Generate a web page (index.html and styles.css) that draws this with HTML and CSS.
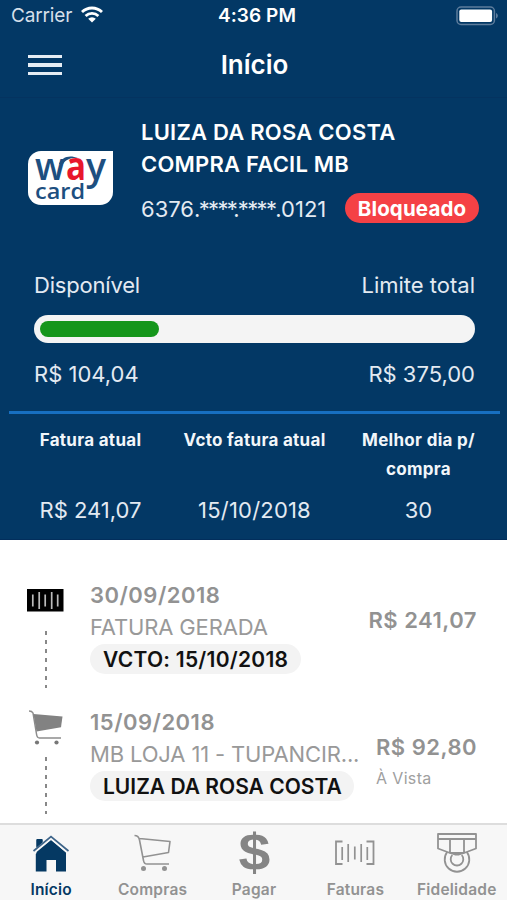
FILE: index.html
```html
<!DOCTYPE html>
<html lang="pt-BR">
<head>
<meta charset="utf-8">
<meta name="viewport" content="width=device-width, initial-scale=1">
<title>Início</title>
<link rel="stylesheet" href="styles.css">
</head>
<body>
<div class="app">
  <header class="top">
    <div class="status">
      <div class="carrier"><span>Carrier</span>
        <svg class="wifi" viewBox="0 0 22 17" width="22" height="17"><g fill="none" stroke="#fff" stroke-width="2.8"><path d="M1 6.1a14.2 14.2 0 0 1 20 0"/><path d="M4.600 10a9.200 9.200 0 0 1 12.800 0"/></g><path d="M11 16.600 7.200 12.700a5.400 5.400 0 0 1 7.600 0z" fill="#fff"/></svg>
      </div>
      <span class="clock">4:36 PM</span>
      <svg class="battery" viewBox="0 0 43 20" width="43" height="20"><rect x="1" y="1" width="37.4" height="17.4" rx="4" fill="none" stroke="#5d7c9c" stroke-width="1.5"/><rect x="3.3" y="3.4" width="32.8" height="12.6" rx="2" fill="#fff"/><path d="M40 7c2.500 1 2.500 4.500 0 5.500z" fill="#5d7c9c"/></svg>
    </div>
    <div class="nav">
      <div class="menu"><i></i><i></i><i></i></div>
      <h1 class="title">Início</h1>
      <span></span>
    </div>
  </header>

  <section class="summary">
    <div class="card">
      <svg class="logo" viewBox="0 0 85 54" width="85" height="54">
        <path d="M13 0H85V41a13 13 0 0 1-13 13H13A13 13 0 0 1 0 41V13A13 13 0 0 1 13 0z" fill="#fff"/>
        <text class="logo-blue" x="7" y="28.500" textLength="30" lengthAdjust="spacingAndGlyphs">w</text>
        <text class="logo-a" x="38" y="28.500" textLength="20" lengthAdjust="spacingAndGlyphs">a</text>
        <text class="logo-blue" x="58" y="28.500" textLength="20" lengthAdjust="spacingAndGlyphs">y</text>
        <path d="M31 13C34 6 41 3.500 50 7 43 6.500 38 8 35 13z" fill="#1d4f80"/>
        <text class="logo-card" x="7" y="47.500" textLength="50" lengthAdjust="spacingAndGlyphs">card</text>
      </svg>
      <div class="holder">
        <div class="name">LUIZA DA ROSA COSTA<br>COMPRA FACIL MB</div>
        <div class="number"><span class="digits">6376<span class="mask">.****.****</span>.0121</span><span class="blocked">Bloqueado</span></div>
      </div>
    </div>
    <div class="limit">
      <div class="row"><span class="available">Disponível</span><span>Limite total</span></div>
      <div class="track"><div class="fill" style="width:27.7%"></div></div>
      <div class="row"><span>R$ 104,04</span><span>R$ 375,00</span></div>
    </div>
    <div class="invoice">
      <div class="col"><b>Fatura atual</b><span>R$ 241,07</span></div>
      <div class="col"><b>Vcto fatura atual</b><span class="due">15/10/2018</span></div>
      <div class="col"><b>Melhor dia p/<br>compra</b><span>30</span></div>
    </div>
  </section>

  <main class="feed">
    <article class="entry invoice-entry">
      <div class="rail">
        <svg viewBox="0 0 38 26" width="38" height="26"><rect y="2" width="36.500" height="22.500" fill="#000"/><g stroke="#bbb" stroke-width="1.700"><path d="M5.800 7.500v12M12.200 5v17M18.200 7.500v12M24.700 5v17M30.700 7.500v12"/></g></svg>
        <div class="dash"></div>
      </div>
      <div class="info">
        <div class="date">30/09/2018</div>
        <div class="desc">FATURA GERADA</div>
        <div class="tag tag-due">VCTO: 15/10/2018</div>
      </div>
      <div class="amount"><b>R$ 241,07</b></div>
    </article>
    <article class="entry">
      <div class="rail">
        <svg viewBox="0 0 38 36" width="38" height="36"><path d="M2 1Q5 1 6 3L9.500 24Q10 28 12.500 28H34" fill="none" stroke="#8d8d8d" stroke-width="1.500"/><path d="M6.500 4 35.500 6.500 34 17.200 9.500 21.500z" fill="#828282"/><circle cx="10" cy="32.500" r="2.100" fill="#777"/><circle cx="29.500" cy="32.500" r="2.100" fill="#777"/></svg>
        <div class="dash"></div>
      </div>
      <div class="info">
        <div class="date">15/09/2018</div>
        <div class="desc">MB LOJA 11 - TUPANCIR...</div>
        <div class="tag tag-holder">LUIZA DA ROSA COSTA</div>
      </div>
      <div class="amount"><b>R$ 92,80</b><small>À Vista</small></div>
    </article>
  </main>

  <nav class="tabs">
    <div class="tab active">
      <svg viewBox="0 0 40 44" width="40" height="44"><path d="M5.500 19V6h6v6.500L20 5.500 35 18.500V37.500H25V26H15.500V37.500H4.800V20z" fill="#053963"/><path d="M2.500 18 20 3.500 37.500 18" fill="none" stroke="#f8f8f8" stroke-width="4"/><path d="M2.500 17 20 2.500 37.500 17" fill="none" stroke="#3d6489" stroke-width="1.700"/><path d="M5.500 13.500V5h6V8.500z" fill="#053963"/></svg>
      <span>Início</span>
    </div>
    <div class="tab">
      <svg viewBox="0 0 40 44" width="40" height="44"><g fill="none" stroke="#929292" stroke-width="1.600" stroke-linejoin="round"><path d="M1.500 1.500C5 1.500 6 3 6.500 6L10.500 26.500Q11 30 14 30H36M6.500 4.500 37 7.500 35.500 18.500 10 23"/></g><circle cx="10.500" cy="34.500" r="2.500" fill="#929292"/><circle cx="31.500" cy="34.500" r="2.500" fill="#929292"/></svg>
      <span>Compras</span>
    </div>
    <div class="tab">
      <svg viewBox="0 0 40 44" width="40" height="44"><text class="dollar" x="4.500" y="35.500" textLength="32" lengthAdjust="spacingAndGlyphs">$</text></svg>
      <span>Pagar</span>
    </div>
    <div class="tab">
      <svg viewBox="0 0 42 44" width="42" height="44"><g fill="none" stroke="#929292" stroke-width="1.800"><path d="M8.500 7.500H2V30H8.500M32.500 7.500H39.500V30H32.500"/><path d="M8.200 13v13M14.200 10v18M20.800 12.500v13M27.200 10v18M33.300 13v13" stroke-width="1.700"/></g></svg>
      <span>Faturas</span>
    </div>
    <div class="tab">
      <svg viewBox="0 0 42 44" width="42" height="44"><g fill="none" stroke="#929292" stroke-width="1.800" stroke-linejoin="round"><path d="M2 0H40V14.500L28 19H14L2 14.500zM2 5H40M14 5.500V19M28 5.500V19"/><path d="M11.200 18A12.300 12.300 0 1 0 30.800 18"/><path d="M16.300 21A6.300 6.300 0 1 0 25.700 21"/><path d="M14 19 19 20.500H23L28 19"/></g></svg>
      <span>Fidelidade</span>
    </div>
  </nav>
</div>
</body>
</html>
```
FILE: styles.css
```css
* { box-sizing: border-box; }
body {
  margin: 0;
  background: #fff;
  font-family: Inter, "Liberation Sans", sans-serif;
}
.app {
  width: 507px;
  height: 900px;
  display: flex;
  flex-direction: column;
  overflow: hidden;
  white-space: nowrap;
}
svg { display: block; flex: none; overflow: visible; }

.top { height: 98px; background: #033865; color: #fff; border-bottom: 1px solid #043360; flex: none; }
.status {
  height: 30px;
  padding: 0 8px 0 11px;
  display: grid;
  grid-template-columns: 1fr auto 1fr;
  align-items: center;
}
.carrier { display: flex; align-items: center; gap: 9px; font-size: 19px; letter-spacing: -0.15px; color: #d5dfe9; }
.wifi { margin-top: -2px; }
.clock { font-size: 19px; font-weight: 600; line-height: 30px; margin-top: 1px; padding-left: 4px; letter-spacing: 0.1px; }
.battery { justify-self: end; }
.nav {
  height: 68px;
  padding: 2px 26px 0 28px;
  display: grid;
  grid-template-columns: 1fr auto 1fr;
  align-items: center;
}
.menu { display: flex; flex-direction: column; gap: 5px; width: 34px; }
.menu i { height: 3.500px; background: #e6edf4; }
.title { margin: 0; font-size: 26px; font-weight: 600; line-height: 66px; }

.summary { height: 442px; background: #033865; color: #e3eaf2; flex: none; border-bottom: 1px solid #022e5c; }
.card { display: flex; padding: 18px 28px 0; height: 169px; }
.logo { margin-top: 35px; margin-right: 28px; }
.logo-a { font: 700 40px "Open Sans", sans-serif; fill: #e8172c; }
.logo-blue { font: 600 38px "Open Sans", sans-serif; fill: #1d4f80; }
.logo-card { font: 600 22px "Open Sans", sans-serif; fill: #1d4f80; }
.name { font-size: 22px; font-weight: 600; line-height: 32px; color: #fff; letter-spacing: 0.23px; }
.number { display: flex; align-items: center; margin-top: 12px; height: 31px; font-size: 22px; }
.digits { width: 204px; margin-top: 2px; }
.mask { letter-spacing: -1.650px; }
.blocked {
  width: 134px;
  height: 30px;
  margin-top: 1px;
  border-radius: 15px;
  background: #f54145;
  color: #fff;
  font-size: 20.500px;
  letter-spacing: 0.15px;
  font-weight: 700;
  line-height: 31px;
  text-align: center;
}
.limit { padding: 0 32px 0 34px; font-size: 22px; height: 144px; }
.row { display: flex; justify-content: space-between; line-height: 36px; }
.available { letter-spacing: -0.200px; }
.track { height: 28px; margin: 12px 0 13px; padding: 6px; border-radius: 14px; background: #f4f4f4; }
.fill { height: 16px; border-radius: 8px; background: #15961b; }
.invoice {
  margin: 0 7px 0 9px;
  border-top: 3px solid #176fc1;
  display: grid;
  grid-template-columns: 163px 165px 163px;
  padding-top: 12px;
}
.col { display: flex; flex-direction: column; align-items: center; text-align: center; }
.col b { font-size: 17px; line-height: 28.500px; letter-spacing: 0.300px; font-weight: 700; height: 70px; color: #f2f6fa; }
.col span { font-size: 22px; line-height: 28px; }
.due { letter-spacing: 0.200px; }

.feed { height: 283px; flex: none; padding-top: 39px; }
.entry { display: flex; height: 127px; padding: 0 30px 0 27px; color: #929292; }
.rail { width: 63px; height: 127px; flex: none; display: flex; flex-direction: column; }
.rail svg { margin: 4px 0 3px; }
.invoice-entry .rail svg { margin: 8px 0 10px; }
.dash {
  width: 2px;
  height: 57px;
  margin: 8px 0 0 18px;
  background: repeating-linear-gradient(#888 0 4px, transparent 4px 9px);
}
.info { width: 270px; flex: none; }
.date { font-size: 22px; font-weight: 600; line-height: 32px; letter-spacing: 0.500px; }
.desc { font-size: 22px; line-height: 32px; letter-spacing: -0.150px; color: #999; }
.tag { height: 30px; line-height: 31px; border-radius: 15px; background: #f3f3f3; color: #111; font-size: 21px; font-weight: 600; padding-left: 13px; margin-top: 1px; }
.tag-due { width: 211px; letter-spacing: 0.250px; }
.tag-holder { width: 264px; }
.amount { flex: 1; display: flex; flex-direction: column; align-items: flex-end; padding-top: 25px; }
.amount b { font-size: 22px; line-height: 32px; font-weight: 600; letter-spacing: 0.500px; }
.amount small { font-size: 16px; line-height: 30px; width: 101px; letter-spacing: 0.350px; color: #a0a0a0; }

.tabs { height: 77px; flex: none; display: grid; grid-template-columns: repeat(5, 1fr); background: #f7f7f7; border-top: 2px solid #ddd; color: #929292; }
.tab { display: flex; flex-direction: column; align-items: center; padding: 9px 0 0 1px; font-size: 15.500px; font-weight: 600; letter-spacing: 0.200px; line-height: 24px; }
.tab.active { color: #053963; }
.dollar { font: 700 51px "Liberation Sans", sans-serif; fill: #858585; }
```
